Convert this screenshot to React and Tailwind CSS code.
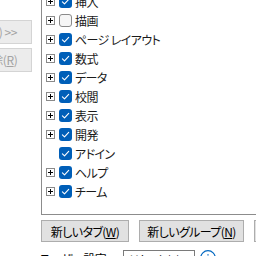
import React from 'react';

const items = [
  { label: '挿入', checked: true, plus: true },
  { label: '描画', checked: false, plus: true },
  { label: 'ページ レイアウト', checked: true, plus: true },
  { label: '数式', checked: true, plus: true },
  { label: 'データ', checked: true, plus: true },
  { label: '校閲', checked: true, plus: true },
  { label: '表示', checked: true, plus: true },
  { label: '開発', checked: true, plus: true },
  { label: 'アドイン', checked: true, plus: false },
  { label: 'ヘルプ', checked: true, plus: true },
  { label: 'チーム', checked: true, plus: true },
];

const PlusBox = () => (
  <svg width="9" height="9" viewBox="0 0 9 9" className="shrink-0">
    <rect x="0.5" y="0.5" width="8" height="8" fill="#fff" stroke="#8a8a8a" />
    <path d="M2 4.5 H7 M4.5 2 V7" stroke="#000" strokeWidth="1" />
  </svg>
);

const CheckBox = ({ checked }) =>
  checked ? (
    <div className="w-[13px] h-[13px] rounded-[3px] bg-[#005fb8] shrink-0 flex items-center justify-center">
      <svg width="13" height="13" viewBox="0 0 13 13">
        <path d="M3.4 6.9 L5.5 8.9 L9.7 4.4" fill="none" stroke="#fff" strokeWidth="1.1" strokeLinecap="round" strokeLinejoin="round" />
      </svg>
    </div>
  ) : (
    <div className="w-[13px] h-[13px] rounded-[3px] bg-[#f6f6f6] border border-[#8a8a8a] shrink-0" />
  );

const TreeRow = ({ label, checked, plus }) => (
  <div className="flex items-center h-[19px]">
    {plus ? <PlusBox /> : <div className="w-[9px] shrink-0" />}
    <div className="ml-[4px]">
      <CheckBox checked={checked} />
    </div>
    <span className="ml-[3px] whitespace-nowrap text-[12px] leading-none tracking-[-0.6px] text-[#1b1b1b]">{label}</span>
  </div>
);

export default function App() {
  return (
    <div
      className="w-[256px] h-[256px] overflow-hidden bg-white relative [font-feature-settings:'palt'_1]"
      style={{ fontFamily: '"Noto Sans CJK JP", "Noto Sans", sans-serif' }}
    >
      <div className="flex -mt-[12px]">
        <div className="w-[32px] mr-[9px] shrink-0 pt-[32px] flex flex-col gap-[4px]">
          <div className="w-[82px] -ml-[50px] h-[24px] bg-[#ececec] border border-[#d4d4d4] flex items-center justify-center text-[12px] tracking-[-0.4px] text-[#a3a3a3] whitespace-nowrap">
            追加(<span className="underline">A</span>) &gt;&gt;
          </div>
          <div className="w-[82px] -ml-[50px] h-[24px] bg-[#ececec] border border-[#d4d4d4] flex items-center justify-center text-[12px] tracking-[-0.4px] text-[#a3a3a3] whitespace-nowrap">
            &lt;&lt; 削除(<span className="underline">R</span>)
          </div>
        </div>
        <div className="w-[240px] shrink-0 border-l border-t border-b border-[#8c8c8c] pl-[4px] pt-[3px] pb-[13px]">
          {items.map((it) => (
            <TreeRow key={it.label} {...it} />
          ))}
        </div>
      </div>

      <div className="flex pl-[41px] gap-[10px] mt-[5px] text-[12px] tracking-[-0.6px] text-black">
        <div className="w-[88px] h-[22px] shrink-0 bg-[#e1e1e1] border border-[#adadad] flex items-center justify-center pt-[2px] whitespace-nowrap">
          新しいタブ(<span className="underline">W</span>)
        </div>
        <div className="w-[105px] h-[22px] shrink-0 bg-[#e1e1e1] border border-[#adadad] flex items-center justify-center pt-[2px] whitespace-nowrap">
          新しいグループ(<span className="underline">N</span>)
        </div>
        <div className="w-[100px] h-[22px] shrink-0 bg-[#e1e1e1] border border-[#adadad] flex items-center justify-center pt-[2px] whitespace-nowrap">
          名前の変更(<span className="underline">M</span>)...
        </div>
      </div>

      <div className="flex items-start mt-[8px] h-[23px] text-[12px] leading-[16px] tracking-[-0.6px] text-black">
        <div className="w-[123px] shrink-0 text-right pr-[14px] pt-[1px] whitespace-nowrap">
          ユーザー設定:
        </div>
        <div className="w-[72px] h-[23px] shrink-0 bg-white border border-[#7a7a7a] pl-[5px] pt-[1px] whitespace-nowrap">
          リセット(<span className="underline">E</span>) ▾
        </div>
        <svg width="16" height="16" viewBox="0 0 16 16" className="ml-[5px] shrink-0">
          <circle cx="8" cy="8" r="7.3" fill="none" stroke="#0067c0" strokeWidth="1.2" />
          <path d="M8 7 V12 M8 4.2 V5.4" stroke="#0067c0" strokeWidth="1.3" />
        </svg>
      </div>
    </div>
  );
}
